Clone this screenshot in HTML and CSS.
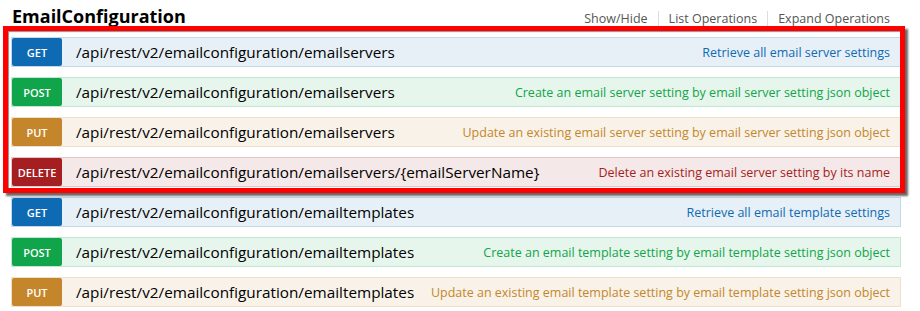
FILE: index.html
```html
<!doctype html>
<html lang="en">
<head>
    <meta charset="UTF-8">
    <title>EmailConfiguration</title>
    <link rel="stylesheet" href="styles.css">
</head>
<body>
<div class="resource">
    <div class="heading">
        <h2>EmailConfiguration</h2>
        <ul class="options">
            <li><a href="#">Show/Hide</a></li>
            <li><a href="#">List Operations</a></li>
            <li><a href="#">Expand Operations</a></li>
        </ul>
    </div>

    <div class="endpoints">
        <div class="endpoint get">
            <span class="method">GET</span>
            <span class="path">/api/rest/v2/emailconfiguration/emailservers</span>
            <span class="summary">Retrieve all email server settings</span>
        </div>
        <div class="endpoint post">
            <span class="method">POST</span>
            <span class="path">/api/rest/v2/emailconfiguration/emailservers</span>
            <span class="summary">Create an email server setting by email server setting json object</span>
        </div>
        <div class="endpoint put">
            <span class="method">PUT</span>
            <span class="path">/api/rest/v2/emailconfiguration/emailservers</span>
            <span class="summary">Update an existing email server setting by email server setting json object</span>
        </div>
        <div class="endpoint delete">
            <span class="method">DELETE</span>
            <span class="path">/api/rest/v2/emailconfiguration/emailservers/{emailServerName}</span>
            <span class="summary">Delete an existing email server setting by its name</span>
        </div>
        <div class="endpoint get">
            <span class="method">GET</span>
            <span class="path">/api/rest/v2/emailconfiguration/emailtemplates</span>
            <span class="summary">Retrieve all email template settings</span>
        </div>
        <div class="endpoint post">
            <span class="method">POST</span>
            <span class="path">/api/rest/v2/emailconfiguration/emailtemplates</span>
            <span class="summary">Create an email template setting by email template setting json object</span>
        </div>
        <div class="endpoint put">
            <span class="method">PUT</span>
            <span class="path">/api/rest/v2/emailconfiguration/emailtemplates</span>
            <span class="summary">Update an existing email template setting by email template setting json object</span>
        </div>

        <!-- red highlight drawn over the first four operations -->
        <div class="highlight"></div>
    </div>
</div>
</body>
</html>
```

FILE: styles.css
```css
body {
    margin: 0;
    background: #fff;
    font-family: "Open Sans", "DejaVu Sans", sans-serif;
    color: #000;
}

.resource {
    width: 890px;
    padding-left: 11px;
}

/* Resource heading */
.heading {
    display: flex;
    align-items: flex-start;
    justify-content: space-between;
    height: 37px;
    box-sizing: border-box;
    padding: 0 11px 0 1px;
}

.heading h2 {
    margin: 5px 0 0;
    font-size: 18px;
    font-weight: bold;
    line-height: 22px;
}

.options {
    display: flex;
    list-style: none;
    margin: 11px 0 0;
    padding: 0;
}

.options li {
    font-size: 12.5px;
    line-height: 15px;
    padding: 0 10px;
    border-left: 1px solid #ddd;
}

.options li:first-child {
    border-left: none;
    padding-left: 0;
}

.options li:last-child {
    padding-right: 0;
}

.options a {
    color: #555;
    text-decoration: none;
}

/* Operation rows */
.endpoints {
    position: relative;
    display: flex;
    flex-direction: column;
    gap: 10px;
}

.endpoint {
    display: flex;
    align-items: center;
    height: 30px;
    box-sizing: border-box;
    border: 1px solid;
    padding-right: 10px;
}

.method {
    width: 50px;
    height: 28px;
    line-height: 29px;
    flex-shrink: 0;
    text-align: center;
    font-size: 11px;
    font-weight: 600;
    color: #fff;
    border-radius: 2px;
}

.path {
    margin-left: 14px;
    font-size: 15.3px;
    white-space: nowrap;
}

.summary {
    margin-left: auto;
    padding-left: 12px;
    font-size: 12.5px;
    white-space: nowrap;
}

.get {
    background: #e7f0f7;
    border-color: #c3d9ec;
}

.get .method {
    background: #0f6ab4;
}

.get .summary {
    color: #0f6ab4;
}

.post {
    background: #e7f6ec;
    border-color: #c3e8d1;
}

.post .method {
    background: #10a54a;
}

.post .summary {
    color: #10a54a;
}

.put {
    background: #f9f2e9;
    border-color: #f0e0ca;
}

.put .method {
    background: #c5862b;
}

.put .summary {
    color: #c5862b;
}

.delete {
    background: #f5e8e8;
    border-color: #e8c6c7;
}

.delete .method {
    background: #a41e22;
}

.delete .summary {
    color: #a41e22;
}

/* Annotation box over the first four operations */
.highlight {
    position: absolute;
    top: -11px;
    left: -8px;
    width: 902px;
    height: 167px;
    box-sizing: border-box;
    border: 5px solid #ff0000;
    box-shadow: 3px 3px 2px rgba(0, 0, 0, 0.6), inset 1px 1px 1px rgba(0, 0, 0, 0.45);
    pointer-events: none;
}
```
